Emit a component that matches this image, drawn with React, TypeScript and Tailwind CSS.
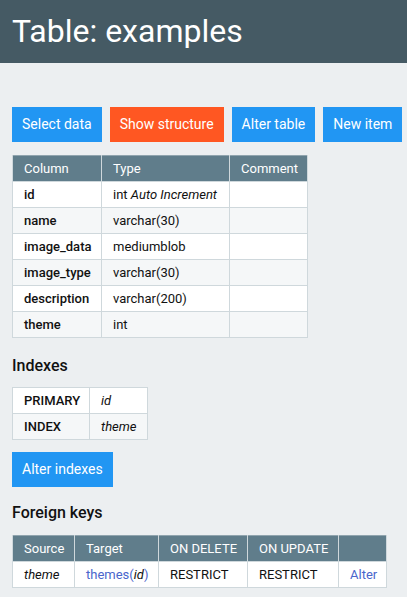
import React from "react";

const th = "border border-[#cfd8dc] px-[11px] h-[26px] text-left font-medium whitespace-nowrap overflow-hidden";
const td = "border border-[#cfd8dc] px-[11px] h-[26px] text-left font-normal whitespace-nowrap overflow-hidden";
const hd = "border border-[#cfd8dc] border-t-0 px-[11px] h-[26px] text-left font-normal text-white whitespace-nowrap overflow-hidden";
const btn = "text-white h-[35px] px-[10px] flex items-center text-[14px] whitespace-nowrap shrink-0";

export default function App() {
  const cols = [
    ["id", "int", "Auto Increment"],
    ["name", "varchar(30)"],
    ["image_data", "mediumblob"],
    ["image_type", "varchar(30)"],
    ["description", "varchar(200)"],
    ["theme", "int"],
  ];
  return (
    <div className="min-h-[597px] bg-[#eceff1] text-[13px] text-[#111] leading-[1.2]" style={{ fontFamily: "Roboto, 'Noto Sans', sans-serif" }}>
      <div className="bg-[#455a64] h-[63px] flex items-center px-[12px]">
        <h1 className="text-white text-[32px] font-normal leading-none -mt-[1px] whitespace-nowrap">Table: examples</h1>
      </div>
      <div className="px-[12px] pt-[44px]">
        <div className="flex gap-[8px]">
          <span className={btn + " bg-[#2196f3]"}>Select data</span>
          <span className={btn + " bg-[#ff5722]"}>Show structure</span>
          <span className={btn + " bg-[#2196f3]"}>Alter table</span>
          <span className={btn + " bg-[#2196f3]"}>New item</span>
        </div>
        <table className="mt-[13px] border-collapse border border-[#90a4ae] table-fixed w-[295px]">
          <thead>
            <tr className="bg-[#607d8b]">
              <th className={hd + " w-[89px]"}>Column</th>
              <td className={hd + " w-[128px]"}>Type</td>
              <td className={hd + " w-[78px]"}>Comment</td>
            </tr>
          </thead>
          <tbody>
            {cols.map((c, i) => (
              <tr key={i} className={i % 2 ? "bg-[#f5f7f8]" : "bg-white"}>
                <th className={th}>{c[0]}</th>
                <td className={td}>
                  {c[1]}
                  {c[2] ? <> <i>{c[2]}</i></> : null}
                </td>
                <td className={td}></td>
              </tr>
            ))}
          </tbody>
        </table>
        <h2 className="text-[16px] font-medium mt-[18px] mb-[12px]">Indexes</h2>
        <table className="border-collapse border border-[#90a4ae] table-fixed w-[135px]">
          <tbody>
            <tr className="bg-white">
              <th className={th + " w-[77px]"}>PRIMARY</th>
              <td className={td + " w-[58px]"}><i>id</i></td>
            </tr>
            <tr className="bg-[#f5f7f8]">
              <th className={th}>INDEX</th>
              <td className={td}><i>theme</i></td>
            </tr>
          </tbody>
        </table>
        <div className="mt-[12px] flex">
          <span className={btn + " bg-[#2196f3]"}>Alter indexes</span>
        </div>
        <h2 className="text-[16px] font-medium mt-[16px] mb-[13px]">Foreign keys</h2>
        <table className="border-collapse border border-[#90a4ae] table-fixed w-[374px]">
          <thead>
            <tr className="bg-[#607d8b]">
              <th className={hd + " w-[62px]"}>Source</th>
              <td className={hd + " w-[84px]"}>Target</td>
              <td className={hd + " w-[89px]"}>ON DELETE</td>
              <td className={hd + " w-[91px]"}>ON UPDATE</td>
              <td className={hd + " w-[48px]"}></td>
            </tr>
          </thead>
          <tbody>
            <tr className="bg-white">
              <th className={td}><i>theme</i></th>
              <td className={td}><span className="text-[#4a66cc]">themes(<i className="text-[#111]">id</i>)</span></td>
              <td className={td}>RESTRICT</td>
              <td className={td}>RESTRICT</td>
              <td className={td}><span className="text-[#4a66cc]">Alter</span></td>
            </tr>
          </tbody>
        </table>
      </div>
    </div>
  );
}
